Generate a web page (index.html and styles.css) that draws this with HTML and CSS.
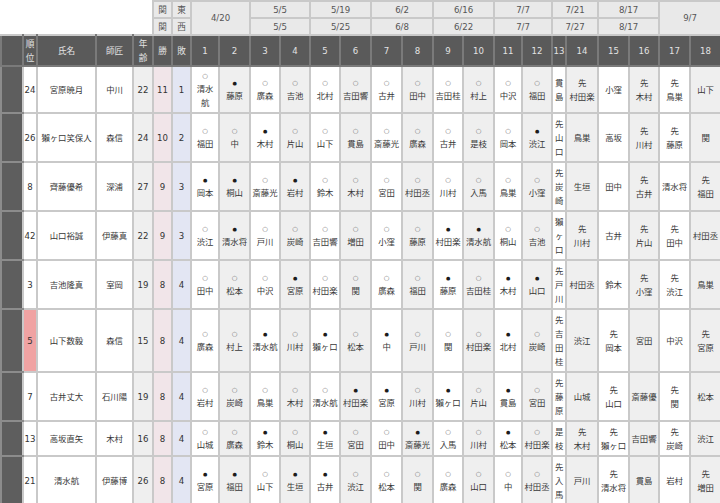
FILE: index.html
```html
<!DOCTYPE html>
<html lang="ja">
<head>
<meta charset="utf-8">
<title>成績表</title>
<link rel="stylesheet" href="styles.css">
</head>
<body>
<table class="tbl">
<colgroup>
<col class="w22"><col class="w14"><col class="w59"><col class="w37"><col class="w20"><col class="w19"><col class="w19">
<col class="w28"><col class="w31"><col class="w30"><col class="w30"><col class="w30"><col class="w31"><col class="w31"><col class="w31"><col class="w30"><col class="w31"><col class="w28"><col class="w30"><col class="w14"><col class="w32"><col class="w31"><col class="w30"><col class="w31"><col class="w31">
</colgroup>
<thead>
<tr>
<th class="blank" colspan="5"></th>
<th class="top">関</th><th class="top">東</th>
<th class="top" colspan="2" rowspan="2">4/20</th>
<th class="top" colspan="2">5/5</th>
<th class="top" colspan="2">5/19</th>
<th class="top" colspan="2">6/2</th>
<th class="top" colspan="2">6/16</th>
<th class="top" colspan="2">7/7</th>
<th class="top" colspan="2">7/21</th>
<th class="top" colspan="2">8/17</th>
<th class="top" colspan="2" rowspan="2">9/7</th>
</tr>
<tr>
<th class="blank" colspan="5"></th>
<th class="top">関</th><th class="top">西</th>
<th class="top" colspan="2">5/5</th>
<th class="top" colspan="2">5/25</th>
<th class="top" colspan="2">6/8</th>
<th class="top" colspan="2">6/22</th>
<th class="top" colspan="2">7/7</th>
<th class="top" colspan="2">7/27</th>
<th class="top" colspan="2">8/17</th>
</tr>
<tr class="hdr">
<th></th><th>順<br>位</th><th>氏名</th><th>師匠</th><th>年<br>齢</th><th>勝</th><th>敗</th>
<th>1</th><th>2</th><th>3</th><th>4</th><th>5</th><th>6</th><th>7</th><th>8</th><th>9</th><th>10</th><th>11</th><th>12</th><th>13</th><th>14</th><th>15</th><th>16</th><th>17</th><th>18</th>
</tr>
</thead>
<tbody class="body">
<tr>
<td></td><td class="n">24</td><td>宮原暁月</td><td>中川</td><td class="n">22</td><td class="n">11</td><td class="n">1</td>
<td><i class="w">○</i>清水<br>航</td><td><i class="l">●</i>藤原</td><td><i class="w">○</i>廣森</td><td><i class="w">○</i>吉池</td><td><i class="w">○</i>北村</td><td><i class="w">○</i>吉田響</td><td><i class="w">○</i>古井</td><td><i class="w">○</i>田中</td><td><i class="w">○</i>吉田桂</td><td><i class="w">○</i>村上</td><td><i class="w">○</i>中沢</td><td><i class="w">○</i>福田</td>
<td>貫<br>島</td><td>先<br>村田楽</td><td>小窪</td><td>先<br>木村</td><td>先<br>鳥巣</td><td>山下</td>
</tr>
<tr>
<td></td><td class="n">26</td><td>獺ヶ口笑保人</td><td>森信</td><td class="n">24</td><td class="n">10</td><td class="n">2</td>
<td><i class="w">○</i>福田</td><td><i class="w">○</i>中</td><td><i class="l">●</i>木村</td><td><i class="w">○</i>片山</td><td><i class="w">○</i>山下</td><td><i class="w">○</i>貫島</td><td><i class="w">○</i>斎藤光</td><td><i class="w">○</i>廣森</td><td><i class="w">○</i>古井</td><td><i class="w">○</i>是枝</td><td><i class="w">○</i>岡本</td><td><i class="l">●</i>渋江</td>
<td>先<br>山<br>口</td><td>鳥巣</td><td>高坂</td><td>先<br>川村</td><td>先<br>藤原</td><td>関</td>
</tr>
<tr>
<td></td><td class="n">8</td><td>齊藤優希</td><td>深浦</td><td class="n">27</td><td class="n">9</td><td class="n">3</td>
<td><i class="l">●</i>岡本</td><td><i class="l">●</i>桐山</td><td><i class="w">○</i>斎藤光</td><td><i class="l">●</i>岩村</td><td><i class="w">○</i>鈴木</td><td><i class="w">○</i>木村</td><td><i class="w">○</i>宮田</td><td><i class="w">○</i>村田丞</td><td><i class="w">○</i>川村</td><td><i class="w">○</i>入馬</td><td><i class="w">○</i>鳥巣</td><td><i class="w">○</i>小窪</td>
<td>先<br>炭<br>崎</td><td>生垣</td><td>田中</td><td>先<br>古井</td><td>清水将</td><td>先<br>福田</td>
</tr>
<tr>
<td></td><td class="n">42</td><td>山口裕誠</td><td>伊藤真</td><td class="n">22</td><td class="n">9</td><td class="n">3</td>
<td><i class="w">○</i>渋江</td><td><i class="l">●</i>清水将</td><td><i class="w">○</i>戸川</td><td><i class="w">○</i>炭崎</td><td><i class="w">○</i>吉田響</td><td><i class="w">○</i>増田</td><td><i class="w">○</i>小窪</td><td><i class="w">○</i>藤原</td><td><i class="l">●</i>村田楽</td><td><i class="l">●</i>清水航</td><td><i class="w">○</i>桐山</td><td><i class="w">○</i>吉池</td>
<td>獺<br>ヶ<br>口</td><td>先<br>川村</td><td>古井</td><td>先<br>片山</td><td>先<br>田中</td><td>村田丞</td>
</tr>
<tr>
<td></td><td class="n">3</td><td>吉池隆真</td><td>室岡</td><td class="n">19</td><td class="n">8</td><td class="n">4</td>
<td><i class="w">○</i>田中</td><td><i class="w">○</i>松本</td><td><i class="w">○</i>中沢</td><td><i class="l">●</i>宮原</td><td><i class="w">○</i>村田楽</td><td><i class="w">○</i>関</td><td><i class="w">○</i>廣森</td><td><i class="w">○</i>福田</td><td><i class="l">●</i>藤原</td><td><i class="w">○</i>吉田桂</td><td><i class="l">●</i>木村</td><td><i class="l">●</i>山口</td>
<td>先<br>戸<br>川</td><td>村田丞</td><td>鈴木</td><td>先<br>小窪</td><td>先<br>渋江</td><td>鳥巣</td>
</tr>
<tr>
<td></td><td class="n hl">5</td><td>山下数毅</td><td>森信</td><td class="n">15</td><td class="n">8</td><td class="n">4</td>
<td><i class="w">○</i>廣森</td><td><i class="w">○</i>村上</td><td><i class="l">●</i>清水航</td><td><i class="w">○</i>川村</td><td><i class="l">●</i>獺ヶ口</td><td><i class="w">○</i>松本</td><td><i class="l">●</i>中</td><td><i class="w">○</i>戸川</td><td><i class="w">○</i>関</td><td><i class="w">○</i>村田楽</td><td><i class="l">●</i>北村</td><td><i class="w">○</i>炭崎</td>
<td>先<br>吉<br>田<br>桂</td><td>渋江</td><td>先<br>岡本</td><td>宮田</td><td>中沢</td><td>先<br>宮原</td>
</tr>
<tr>
<td></td><td class="n">7</td><td>古井丈大</td><td>石川陽</td><td class="n">19</td><td class="n">8</td><td class="n">4</td>
<td><i class="w">○</i>岩村</td><td><i class="w">○</i>炭崎</td><td><i class="w">○</i>鳥巣</td><td><i class="w">○</i>木村</td><td><i class="w">○</i>清水航</td><td><i class="l">●</i>村田楽</td><td><i class="l">●</i>宮原</td><td><i class="w">○</i>川村</td><td><i class="l">●</i>獺ヶ口</td><td><i class="w">○</i>片山</td><td><i class="l">●</i>貫島</td><td><i class="w">○</i>宮田</td>
<td>先<br>藤<br>原</td><td>山城</td><td>先<br>山口</td><td>斎藤優</td><td>先<br>関</td><td>松本</td>
</tr>
<tr>
<td></td><td class="n">13</td><td>高坂直矢</td><td>木村</td><td class="n">16</td><td class="n">8</td><td class="n">4</td>
<td><i class="w">○</i>山城</td><td><i class="w">○</i>廣森</td><td><i class="l">●</i>鈴木</td><td><i class="w">○</i>桐山</td><td><i class="l">●</i>生垣</td><td><i class="w">○</i>宮田</td><td><i class="w">○</i>田中</td><td><i class="l">●</i>斎藤光</td><td><i class="w">○</i>入馬</td><td><i class="w">○</i>川村</td><td><i class="l">●</i>松本</td><td><i class="w">○</i>村田楽</td>
<td>是<br>枝</td><td>先<br>木村</td><td>先<br>獺ヶ口</td><td>吉田響</td><td>先<br>炭崎</td><td>渋江</td>
</tr>
<tr>
<td></td><td class="n">21</td><td>清水航</td><td>伊藤博</td><td class="n">26</td><td class="n">8</td><td class="n">4</td>
<td><i class="l">●</i>宮原</td><td><i class="l">●</i>福田</td><td><i class="w">○</i>山下</td><td><i class="l">●</i>生垣</td><td><i class="l">●</i>古井</td><td><i class="w">○</i>渋江</td><td><i class="w">○</i>松本</td><td><i class="w">○</i>関</td><td><i class="w">○</i>廣森</td><td><i class="w">○</i>山口</td><td><i class="w">○</i>中</td><td><i class="w">○</i>村田丞</td>
<td>先<br>入<br>馬</td><td>戸川</td><td>先<br>清水将</td><td>貫島</td><td>岩村</td><td>先<br>増田</td>
</tr>
</tbody>
</table>
</body>
</html>
```
FILE: styles.css
```css
html, body {
  margin: 0;
  padding: 0;
  background: #ffffff;
}
body {
  font-family: "DejaVu Sans", "Noto Sans CJK JP", sans-serif;
  font-size: 8.4px;
  color: #383838;
}
.tbl {
  border-collapse: collapse;
  table-layout: fixed;
  width: 720px;
}
.w14 { width: 14px; }
.w19 { width: 19px; }
.w20 { width: 20px; }
.w22 { width: 22px; }
.w28 { width: 28px; }
.w30 { width: 30px; }
.w31 { width: 31px; }
.w32 { width: 32px; }
.w37 { width: 37px; }
.w59 { width: 59px; }

.tbl th, .tbl td {
  border: 2px solid #c9c9c9;
  text-align: center;
  vertical-align: middle;
  white-space: nowrap;
  line-height: 14px;
  font-weight: normal;
  overflow: hidden;
  padding: 2.5px 0;
}
.tbl th.blank {
  border: none;
  background: #ffffff;
}
.tbl th.top {
  background: #e9e9e9;
  color: #555555;
  padding: 0.5px 0;
  font-size: 8.6px;
}
.hdr th {
  background: #5a5a5a;
  color: #e2e2e2;
  border-color: #c9c9c9 #7a7a7a #7a7a7a #7a7a7a;
  padding: 0.5px 0;
  font-size: 8.6px;
}
.body td:nth-child(1) {
  background: #5e5e5e;
  border-color: #8c8c8c #c9c9c9 #8c8c8c #8c8c8c;
}
.body td:nth-child(5) { background: #efefef; }
.body td:nth-child(6) { background: #f1e5e9; }
.body td:nth-child(7) { background: #e3e6f3; }
.body td:nth-child(2n+9) { background: #efefef; }
.body td.hl { background: #f0a3a3; }
.body td.n {
  font-size: 8.6px;
  color: #333333;
}
.body i {
  display: block;
  font-family: "DejaVu Sans", sans-serif;
  font-style: normal;
  font-size: 6.5px;
  line-height: 12px;
  opacity: 0.99;
}
.body i.w { color: #6e6e6e; }
.body i.l { color: #1a1a1a; font-size: 5px; }
```
